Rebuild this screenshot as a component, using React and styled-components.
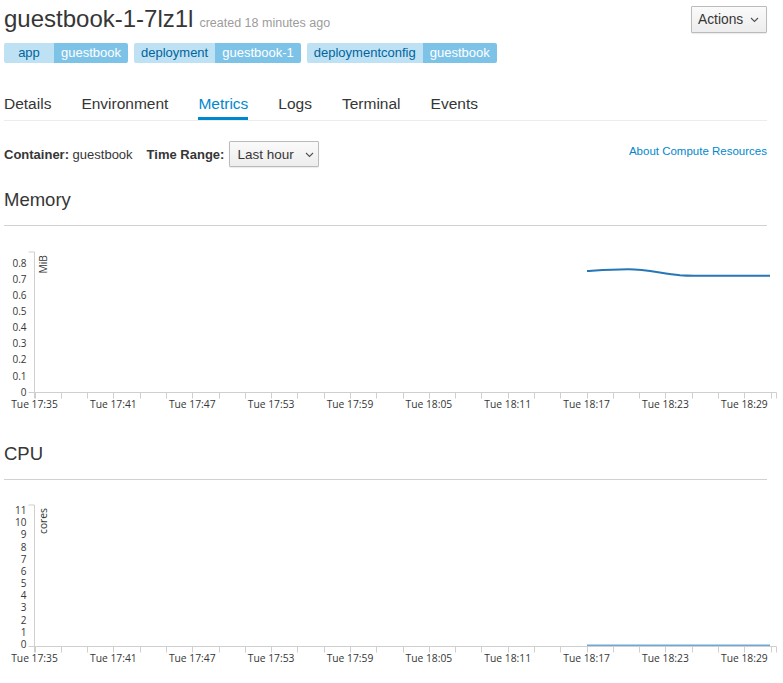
import React from "react";
import styled, { createGlobalStyle } from "styled-components";

const GlobalStyle = createGlobalStyle`
  body {
    margin: 0;
    background: #fff;
    font-family: "Liberation Sans", Arial, sans-serif;
    color: #363636;
  }
`;

const labels = [
  ["app", "guestbook"],
  ["deployment", "guestbook-1"],
  ["deploymentconfig", "guestbook"],
];

const tabs = ["Details", "Environment", "Metrics", "Logs", "Terminal", "Events"];

const TICK_START = 34.5;
const TICK_STEP = 26.29;
const AXIS_Y = 166.5;

const timeLabel = (i) => {
  const mins = 17 * 60 + 35 + i * 2;
  const h = Math.floor(mins / 60);
  const m = String(mins % 60).padStart(2, "0");
  return `Tue ${h}:${m}`;
};

const Chevron = () => (
  <ChevronSvg width="9" height="6" viewBox="0 0 9 6">
    <polyline points="1,1 4.5,4.5 8,1" fill="none" stroke="#4d5258" strokeWidth="1.1" />
  </ChevronSvg>
);

const Chart = ({ unit, ticks, valueY, domainTop, children }) => {
  const xs = [];
  for (let i = 0; i <= 28; i++) xs.push(TICK_START + i * TICK_STEP);
  return (
    <ChartSvg width="783" height="200" viewBox="0 0 783 200">
      <g fill="#363636" fontSize="10.3" fontFamily="'Open Sans', sans-serif">
        {ticks.map((t) => (
          <text key={t} x="26.5" y={valueY(t)} fontSize="10" textAnchor="end" dominantBaseline="central">
            {t}
          </text>
        ))}
        {xs.map((x, i) =>
          i % 3 === 0 && i < 28 ? (
            <text key={i} x={x} y={AXIS_Y + 15} textAnchor="middle">
              {timeLabel(i)}
            </text>
          ) : null
        )}
        <text x="47" y={domainTop + 3} textAnchor="end" transform={`rotate(-90 47 ${domainTop + 3})`}>
          {unit}
        </text>
      </g>
      <g stroke="#cfcfcf" fill="none" strokeWidth="1">
        <path d={`M28.5 ${domainTop} H34.5 V${AXIS_Y} H28.5`} />
        <path d={`M34.5 ${AXIS_Y + 6} V${AXIS_Y} H776.5 V${AXIS_Y + 6}`} />
        {xs.map((x, i) => (
          <line key={i} x1={Math.round(x) + 0.5} x2={Math.round(x) + 0.5} y1={AXIS_Y} y2={AXIS_Y + 6} />
        ))}
      </g>
      {children}
    </ChartSvg>
  );
};

const memTicks = [0, 0.1, 0.2, 0.3, 0.4, 0.5, 0.6, 0.7, 0.8];
const cpuTicks = [0, 1, 2, 3, 4, 5, 6, 7, 8, 9, 10, 11];

const App = () => {
  return (
    <Page>
      <GlobalStyle />
      <Header>
        <Title>
          guestbook-1-7lz1l
          <Created>created 18 minutes ago</Created>
        </Title>
        <DropButton>
          Actions
          <Chevron />
        </DropButton>
      </Header>

      <Labels>
        {labels.map(([k, v]) => (
          <Label key={k + v}>
            <LabelKey>{k}</LabelKey>
            <LabelValue>{v}</LabelValue>
          </Label>
        ))}
      </Labels>

      <Tabs>
        {tabs.map((t) => (
          <Tab key={t} $active={t === "Metrics"}>
            {t}
          </Tab>
        ))}
      </Tabs>

      <Controls>
        <Field>
          <strong>Container:</strong> guestbook
        </Field>
        <Field>
          <strong>Time Range:</strong>
        </Field>
        <SelectButton>
          Last hour
          <Chevron />
        </SelectButton>
        <HelpLink href="#">About Compute Resources</HelpLink>
      </Controls>

      <Section $first>
        <SectionTitle>Memory</SectionTitle>
        <Rule />
        <Chart unit="MiB" ticks={memTicks} valueY={(v) => 165.7 - v * 161.25} domainTop={26}>
          <path
            d="M587 45 C600 44.2 612 43.3 628 43.2 C645 43.1 660 47 680 49.2 C686 49.7 690 49.7 694 49.7 L770 49.7"
            fill="none"
            stroke="#2776b6"
            strokeWidth="2"
          />
        </Chart>
      </Section>

      <Section>
        <SectionTitle>CPU</SectionTitle>
        <Rule />
        <Chart unit="cores" ticks={cpuTicks} valueY={(v) => 164 - v * 12.18} domainTop={25}>
          <path d="M587 165.3 H770" fill="none" stroke="#6fa7d6" strokeWidth="1.4" />
        </Chart>
      </Section>
    </Page>
  );
};

export default App;

const Page = styled.div`
  width: 763px;
  padding: 0 16px 20px 4px;
`;

const Header = styled.div`
  display: flex;
  justify-content: space-between;
  align-items: flex-start;
  padding-top: 2px;
`;

const Title = styled.h1`
  margin: 0;
  font-size: 24px;
  font-weight: normal;
  line-height: 34px;
  height: 34px;
  color: #363636;
`;

const Created = styled.span`
  font-size: 12.5px;
  line-height: 1;
  color: #9c9c9c;
  margin-left: 6px;
`;

const DropButton = styled.button`
  display: flex;
  align-items: center;
  gap: 7px;
  box-sizing: border-box;
  height: 27px;
  width: 76px;
  margin-top: 4px;
  padding: 0 0 0 6px;
  border: 1px solid #bbb;
  border-radius: 1px;
  background: linear-gradient(#fafafa, #ededed);
  box-shadow: 0 1px 1px rgba(3, 3, 3, 0.08);
  font-family: "Liberation Sans", Arial, sans-serif;
  font-size: 13.8px;
  color: #363636;
`;

const ChevronSvg = styled.svg`
  display: block;
  margin-top: 1px;
`;

const Labels = styled.div`
  display: flex;
  gap: 6px;
  margin-top: 7px;
`;

const Label = styled.div`
  display: flex;
  height: 20px;
  font-size: 13px;
  line-height: 20px;
  border-radius: 2px;
  overflow: hidden;
`;

const LabelKey = styled.span`
  background: #bee1f4;
  color: #00659c;
  min-width: 36px;
  text-align: center;
  padding: 0 7px;
`;

const LabelValue = styled.span`
  background: #7dc3e8;
  color: #fff;
  padding: 0 7px;
`;

const Tabs = styled.nav`
  display: flex;
  gap: 30px;
  margin-top: 31px;
  border-bottom: 1px solid #ececec;
`;

const Tab = styled.a`
  display: block;
  font-size: 15.5px;
  line-height: 20px;
  padding-bottom: 6px;
  margin-bottom: -1px;
  border-bottom: 1px solid transparent;
  color: ${(p) => (p.$active ? "#0088ce" : "#363636")};
  box-shadow: ${(p) => (p.$active ? "inset 0 -3px 0 #0088ce" : "none")};
  cursor: pointer;
`;

const Controls = styled.div`
  display: flex;
  align-items: center;
  margin-top: 20px;
  font-size: 13px;
  height: 26px;
`;

const Field = styled.span`
  margin-right: 14px;
  &:nth-child(2) {
    margin-right: 5px;
  }
`;

const SelectButton = styled(DropButton)`
  width: 90px;
  height: 26px;
  margin-top: 0;
  padding-left: 7px;
  gap: 11px;
  font-size: 13.5px;
`;

const HelpLink = styled.a`
  margin-left: auto;
  align-self: flex-start;
  margin-top: 2px;
  font-size: 11.5px;
  line-height: 16px;
  color: #0088ce;
  text-decoration: none;
`;

const Section = styled.section`
  margin-top: ${(p) => (p.$first ? "21px" : "16px")};
`;

const SectionTitle = styled.h2`
  margin: 0;
  font-size: 18.5px;
  font-weight: normal;
  line-height: 24px;
  color: #363636;
`;

const Rule = styled.div`
  height: 1px;
  background: #d1d1d1;
  margin-top: 13px;
`;

const ChartSvg = styled.svg`
  display: block;
  margin-left: -4px;
`;
